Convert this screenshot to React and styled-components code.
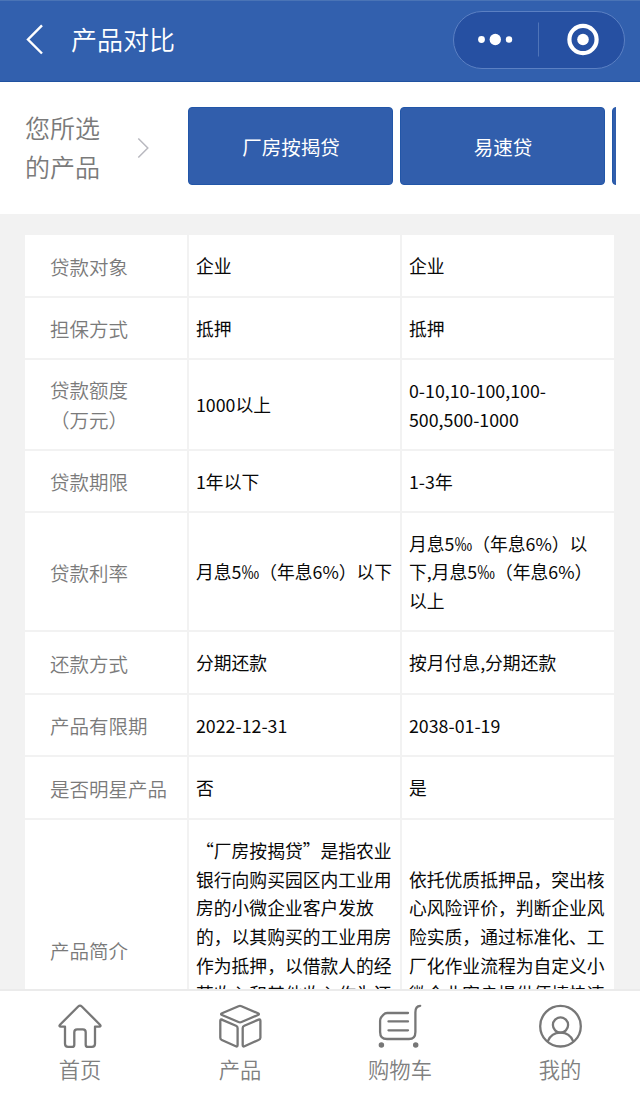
import React from "react";
import styled, { createGlobalStyle } from "styled-components";

const GlobalStyle = createGlobalStyle`
  * { box-sizing: border-box; }
  body {
    margin: 0;
    font-family: "Noto Sans CJK SC", sans-serif;
    background: #f2f2f2;
    overflow: hidden;
  }
`;

const Page = styled.div`
  width: 640px;
  height: 1093px;
  display: flex;
  flex-direction: column;
  overflow: hidden;
  background: #f2f2f2;
`;

const Header = styled.header`
  flex: none;
  height: 82px;
  padding: 0 15px 3px 25px;
  display: flex;
  align-items: center;
  background: #3260ae;
  border-top: 1px solid #4a74b6;
  border-bottom: 1px solid #2052a0;
  color: #fff;
`;

const Title = styled.h1`
  margin: 0 0 2px 26px;
  flex: 1;
  font-size: 26px;
  line-height: 40px;
  font-weight: 350;
`;

const Capsule = styled.div`
  width: 172px;
  height: 58px;
  margin-top: 1px;
  border: 1px solid #5b80c3;
  border-radius: 29px;
  background: #2650a2;
`;

const Selection = styled.section`
  flex: none;
  height: 132px;
  padding: 25px 24px 0 25px;
  display: flex;
  background: #fff;
`;

const SelectionLabel = styled.div`
  width: 112px;
  padding-top: 1px;
  font-size: 25px;
  line-height: 39px;
  font-weight: 350;
  color: #7a7a7a;
`;

const ArrowSlot = styled.div`
  width: 51.4px;
  padding-top: 31px;
`;

const Products = styled.div`
  flex: 1;
  display: flex;
  gap: 7px;
  overflow: hidden;
`;

const ProductButton = styled.button`
  flex: none;
  width: 205px;
  height: 78px;
  padding: 1px 0 0;
  border: 1px solid #2256a8;
  border-radius: 4px;
  background: #315eac;
  color: #fff;
  font: 400 19.5px "Noto Sans CJK SC", sans-serif;
`;

const TableArea = styled.main`
  flex: 1;
  min-height: 0;
  padding: 21px 26px 0 25px;
  overflow: hidden;
`;

const Row = styled.div`
  display: grid;
  grid-template-columns: 162px 211px 212px;
  column-gap: 2px;
  height: ${(p) => p.$height}px;
  margin-bottom: 2px;
`;

const Cell = styled.div`
  display: flex;
  align-items: center;
  padding: 0 7px 0 7px;
  background: #fff;
  color: #080808;
  font-size: 17.8px;
  line-height: 28.6px;
`;

const LabelCell = styled(Cell)`
  padding: ${(p) => (p.$tall ? 1 : 2)}px 0 0 25px;
  color: #7a7a7a;
  font-size: 19.5px;
  line-height: 30px;
  font-weight: 350;
  white-space: pre-line;
`;

const TabBar = styled.nav`
  flex: none;
  height: 104px;
  display: flex;
  background: #fff;
  border-top: 2px solid #ebebeb;
`;

const Tab = styled.a`
  flex: 1;
  display: flex;
  flex-direction: column;
  align-items: center;
  padding-top: 12px;
  color: #808080;
  font-size: 21.3px;
  line-height: 32px;
  font-weight: 350;
`;

const TabIcon = styled.svg`
  width: 44px;
  height: 46px;
  margin-bottom: 4px;
  overflow: visible;
  fill: none;
  stroke: #777;
  stroke-width: 2.3;
  stroke-linecap: round;
  stroke-linejoin: round;
`;

const rows = [
  { label: "贷款对象", values: ["企业", "企业"], height: 61 },
  { label: "担保方式", values: ["抵押", "抵押"], height: 60 },
  { label: "贷款额度\n（万元）", values: ["1000以上", "0-10,10-100,100-500,500-1000"], height: 89, tall: true },
  { label: "贷款期限", values: ["1年以下", "1-3年"], height: 60 },
  { label: "贷款利率", values: ["月息5‰（年息6%）以下", "月息5‰（年息6%）以下,月息5‰（年息6%）以上"], height: 117 },
  { label: "还款方式", values: ["分期还款", "按月付息,分期还款"], height: 61 },
  { label: "产品有限期", values: ["2022-12-31", "2038-01-19"], height: 60 },
  { label: "是否明星产品", values: ["否", "是"], height: 61 },
  {
    label: "产品简介",
    values: [
      "“厂房按揭贷”是指农业银行向购买园区内工业用房的小微企业客户发放的，以其购买的工业用房作为抵押，以借款人的经营收入和其他收入作为还款来源，按照合同约定分期偿还本息的贷款业务。",
      "依托优质抵押品，突出核心风险评价，判断企业风险实质，通过标准化、工厂化作业流程为自定义小微企业客户提供便捷快速的融资服务。",
    ],
    height: 261,
    tall: true,
  },
];

const tabs = [
  {
    label: "首页",
    icon: (
      <path d="M20.2 3.5 2 21.7c-1 1-.5 2 .8 2H7v17.1q0 3.1 3.1 3.1h4q2.2 0 2.2-2.2V29.2q0-2.8 2.8-2.8h5.8q2.8 0 2.8 2.8v12.5q0 2.2 2.2 2.2h4q3.1 0 3.1-3.1V23.7h4.2c1.3 0 1.8-1 .8-2L23.8 3.5q-1.8-1.7-3.6 0Z" />
    ),
  },
  {
    label: "产品",
    icon: (
      <>
        <path d="M20.5 3.2 4 10.3q-1.9.8 0 1.7l16.5 7q1.5.7 3 0L40 12q1.9-.9 0-1.7L23.5 3.2q-1.5-.6-3 0Z" />
        <path d="M3.7 16.6 18 22.8q1.6.7 1.6 2.3v17q0 2-1.8 1.1L3.8 37q-1.5-.7-1.5-2.2V17.8q0-2 1.9-1.2ZM40.6 16.6 26.3 22.8q-1.6.7-1.6 2.3v17q0 2 1.8 1.1l14-6.2q1.9-.7 1.9-2.2V17.8q0-2-1.9-1.2Z" />
      </>
    ),
  },
  {
    label: "购物车",
    icon: (
      <>
        <path d="M30 10H9.2Q7 10 5.4 11.8L3.6 13.8Q2.1 15.4 2.1 17.6V29Q2.1 36 9 36h22q6.4 0 6.4-7V9.2q0-6.2 4.8-6.4" />
        <path d="M10.5 18.4H30M10.5 27.3H30" />
        <circle cx="3.4" cy="42" r="1.6" fill="#777" />
        <circle cx="37.7" cy="42" r="1.6" fill="#777" />
      </>
    ),
  },
  {
    label: "我的",
    icon: (
      <>
        <circle cx="22.5" cy="23.2" r="20.3" />
        <circle cx="22.5" cy="22" r="7.6" />
        <path d="M9.7 38.4c2.3-5.8 6.7-8.8 12.8-8.8s10.5 3 12.8 8.8" />
      </>
    ),
  },
];

export default function App() {
  return (
    <Page lang="zh-CN">
      <GlobalStyle />
      <Header>
        <svg width="20" height="32" viewBox="0 0 20 32" fill="none" stroke="#fff" strokeWidth="2.4">
          <path d="M17 1.3 3 15.5l14 14" />
        </svg>
        <Title>产品对比</Title>
        <Capsule>
          <svg width="170" height="56" viewBox="0 0 170 56" fill="#fff">
            <circle cx="27.5" cy="27.5" r="3.4" />
            <circle cx="41.3" cy="27.5" r="5.7" />
            <circle cx="55" cy="27.5" r="3.2" />
            <path d="M84.5 10.5v34" stroke="#4f74b8" />
            <circle cx="129" cy="27.5" r="13.6" fill="none" stroke="#fff" strokeWidth="4.2" />
            <circle cx="129" cy="27.5" r="5.8" />
          </svg>
        </Capsule>
      </Header>
      <Selection>
        <SelectionLabel>您所选<br />的产品</SelectionLabel>
        <ArrowSlot>
          <svg width="13" height="20" viewBox="0 0 13 20" fill="none" stroke="#b9b9c0" strokeWidth="1.5">
            <path d="m1.3.5 9.5 9.5-9.5 9.5" />
          </svg>
        </ArrowSlot>
        <Products>
          <ProductButton>厂房按揭贷</ProductButton>
          <ProductButton>易速贷</ProductButton>
          <ProductButton aria-label="第三个产品" />
        </Products>
      </Selection>
      <TableArea>
        {rows.map((row) => (
          <Row key={row.label} $height={row.height}>
            <LabelCell $tall={row.tall}>{row.label}</LabelCell>
            {row.values.map((value, i) => (
              <Cell key={i}>{value}</Cell>
            ))}
          </Row>
        ))}
      </TableArea>
      <TabBar>
        {tabs.map((tab) => (
          <Tab key={tab.label}>
            <TabIcon viewBox="0 0 44 46">{tab.icon}</TabIcon>
            {tab.label}
          </Tab>
        ))}
      </TabBar>
    </Page>
  );
}
